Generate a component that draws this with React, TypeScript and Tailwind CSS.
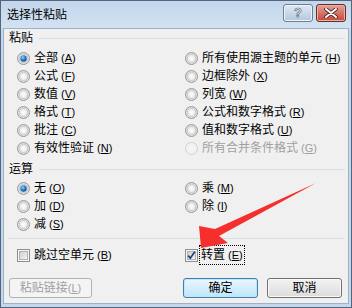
import { FC, ReactNode } from "react";

const font = { fontFamily: '"Liberation Sans", "Noto Sans CJK SC", sans-serif' };

const Radio: FC<{ checked?: boolean; disabled?: boolean }> = ({ checked, disabled }) => (
  <svg width="13" height="13" viewBox="0 0 13 13" className="shrink-0">
    <defs>
      <radialGradient id="rfill" cx="0.5" cy="0.5" r="0.6">
        <stop offset="0" stopColor="#ffffff" />
        <stop offset="1" stopColor="#d4d4d4" />
      </radialGradient>
      <radialGradient id="rdot" cx="0.4" cy="0.35" r="0.7">
        <stop offset="0" stopColor="#8fd0ff" />
        <stop offset="0.6" stopColor="#1f78c8" />
        <stop offset="1" stopColor="#0f3f70" />
      </radialGradient>
    </defs>
    <circle
      cx="6.5"
      cy="6.5"
      r="6"
      fill={disabled ? "#f4f4f4" : "url(#rfill)"}
      stroke={disabled ? "#d0d0d0" : "#9a9a9a"}
    />
    <circle cx="6.5" cy="6.5" r="4.2" fill="none" stroke={disabled ? "#eeeeee" : "#c8c8c8"} />
    {checked && <circle cx="6.5" cy="6.5" r="3.2" fill="url(#rdot)" />}
  </svg>
);

const Check: FC<{ checked?: boolean }> = ({ checked }) => (
  <svg width="13" height="13" viewBox="0 0 13 13" className="shrink-0">
    <defs>
      <linearGradient id="cfill" x1="0" y1="0" x2="1" y2="1">
        <stop offset="0" stopColor="#cbcbcb" />
        <stop offset="1" stopColor="#f6f6f6" />
      </linearGradient>
    </defs>
    <rect x="0.5" y="0.5" width="12" height="12" fill="#f4f4f4" stroke="#8e8f8f" />
    <rect x="2.5" y="2.5" width="8" height="8" fill="url(#cfill)" stroke="#b3b3b3" />
    {checked && (
      <path d="M3.2 6.6 L5.3 9.2 L9.8 2.8" fill="none" stroke="#1c3e82" strokeWidth="1.7" />
    )}
  </svg>
);

const Key: FC<{ k: string }> = ({ k }) => (
  <span className="text-[11px]">
    {" ("}
    <span className="underline">{k}</span>)
  </span>
);

const Option: FC<{ label: string; k: string; checked?: boolean; disabled?: boolean }> = ({
  label,
  k,
  checked,
  disabled,
}) => (
  <div className={`flex h-[18px] items-center gap-[4px] ${disabled ? "text-[#a0a0a0]" : "text-black"}`}>
    <Radio checked={checked} disabled={disabled} />
    <span className="whitespace-nowrap">
      {label}
      <Key k={k} />
    </span>
  </div>
);

const Group: FC<{ title: string }> = ({ title }) => (
  <div className="flex h-[18px] items-center gap-[6px] pl-[5px] pr-[3px]">
    <span>{title}</span>
    <div className="h-px flex-1 bg-[#d5dfe5]" />
  </div>
);

const Button: FC<{ children: ReactNode; primary?: boolean; disabled?: boolean }> = ({
  children,
  primary,
  disabled,
}) => (
  <div
    className={`flex h-[20px] items-center justify-center rounded-[3px] border text-[12px] ${
      disabled
        ? "w-[83px] border-[#adb2b5] bg-[#f4f4f4] text-[#a0a0a0]"
        : primary
          ? "w-[75px] border-[#3c7fb1] bg-gradient-to-b from-[#eaf6fd] to-[#bee6fd] shadow-[inset_0_0_0_1px_#c4e5f6]"
          : "w-[75px] border-[#707070] bg-gradient-to-b from-[#f2f2f2] to-[#dcdcdc] shadow-[inset_0_0_0_1px_#fafafa]"
    }`}
  >
    {children}
  </div>
);

export default function App() {
  return (
    <div
      className="relative flex h-[308px] w-[352px] flex-col border border-[#54667c] bg-[#c4d7ed] text-[12px] leading-[14px] text-black"
      style={font}
    >
      {/* title bar */}
      <div className="flex h-[27px] shrink-0 items-center justify-between bg-gradient-to-b from-[#c2d6ec] to-[#d3e2f2] pl-[6px] pr-[5px]">
        <span className="text-[12px] text-black">选择性粘贴</span>
        <div className="flex items-start gap-[3px] self-start pt-[3px]">
          <div className="flex h-[18px] w-[30px] items-center justify-center rounded-[3px] border border-[#6f7f92] bg-gradient-to-b from-[#dfe9f5] to-[#b5c7dc] shadow-[inset_0_0_0_1px_#eef4fb]">
            <span className="text-[13px] font-bold text-white [-webkit-text-stroke:0.6px_#44546a]">?</span>
          </div>
          <div className="flex h-[18px] w-[30px] items-center justify-center rounded-[3px] border border-[#6b2a25] bg-gradient-to-b from-[#e2a195] to-[#c2473a] shadow-[inset_0_0_0_1px_#eab1a6]">
            <svg width="14" height="10" viewBox="0 0 14 10">
              <path d="M2 1 L12 9 M12 1 L2 9" stroke="#47201c" strokeWidth="3.6" strokeLinecap="round" />
              <path d="M2 1 L12 9 M12 1 L2 9" stroke="#ffffff" strokeWidth="2" strokeLinecap="round" />
            </svg>
          </div>
        </div>
      </div>

      {/* client area */}
      <div className="mx-[2px] mb-[3px] flex flex-1 flex-col border border-[#9fb1c6] bg-[#f0f0f0]">
        <Group title="粘贴" />
        <div className="mt-[2px] grid grid-cols-[168px_1fr] pl-[13px]">
          <div className="flex flex-col">
            <Option label="全部" k="A" checked />
            <Option label="公式" k="F" />
            <Option label="数值" k="V" />
            <Option label="格式" k="T" />
            <Option label="批注" k="C" />
            <Option label="有效性验证" k="N" />
          </div>
          <div className="flex flex-col">
            <Option label="所有使用源主题的单元" k="H" />
            <Option label="边框除外" k="X" />
            <Option label="列宽" k="W" />
            <Option label="公式和数字格式" k="R" />
            <Option label="值和数字格式" k="U" />
            <Option label="所有合并条件格式" k="G" disabled />
          </div>
        </div>

        <div className="mt-[3px]">
          <Group title="运算" />
        </div>
        <div className="mt-[1px] grid grid-cols-[168px_1fr] pl-[13px]">
          <div className="flex flex-col">
            <Option label="无" k="O" checked />
            <Option label="加" k="D" />
            <Option label="减" k="S" />
          </div>
          <div className="flex flex-col">
            <Option label="乘" k="M" />
            <Option label="除" k="I" />
          </div>
        </div>

        <div className="mx-[4px] mt-[5px] h-px bg-[#d5dfe5]" />

        <div className="mt-[6px] grid h-[18px] grid-cols-[168px_1fr] pl-[13px]">
          <div className="flex items-center gap-[4px]">
            <Check />
            <span>
              跳过空单元
              <Key k="B" />
            </span>
          </div>
          <div className="flex items-center gap-[1px]">
            <Check checked />
            <span className="border border-dotted border-black px-[1px] py-[2px]">
              转置
              <Key k="E" />
            </span>
          </div>
        </div>

        <div className="mt-[15px] flex items-center pl-[5px] pr-[6px]">
          <Button disabled>
            粘贴链接
            <Key k="L" />
          </Button>
          <div className="ml-auto flex gap-[9px]">
            <Button primary>确定</Button>
            <Button>取消</Button>
          </div>
        </div>
      </div>

      {/* annotation arrow drawn over the dialog */}
      <svg
        className="pointer-events-none absolute left-0 top-0"
        width="352"
        height="308"
        viewBox="0 0 352 308"
      >
        <polygon
          points="315,182 218,235 227,242 200,247 198,225 214,228"
          fill="#f5302c"
        />
      </svg>
    </div>
  );
}
